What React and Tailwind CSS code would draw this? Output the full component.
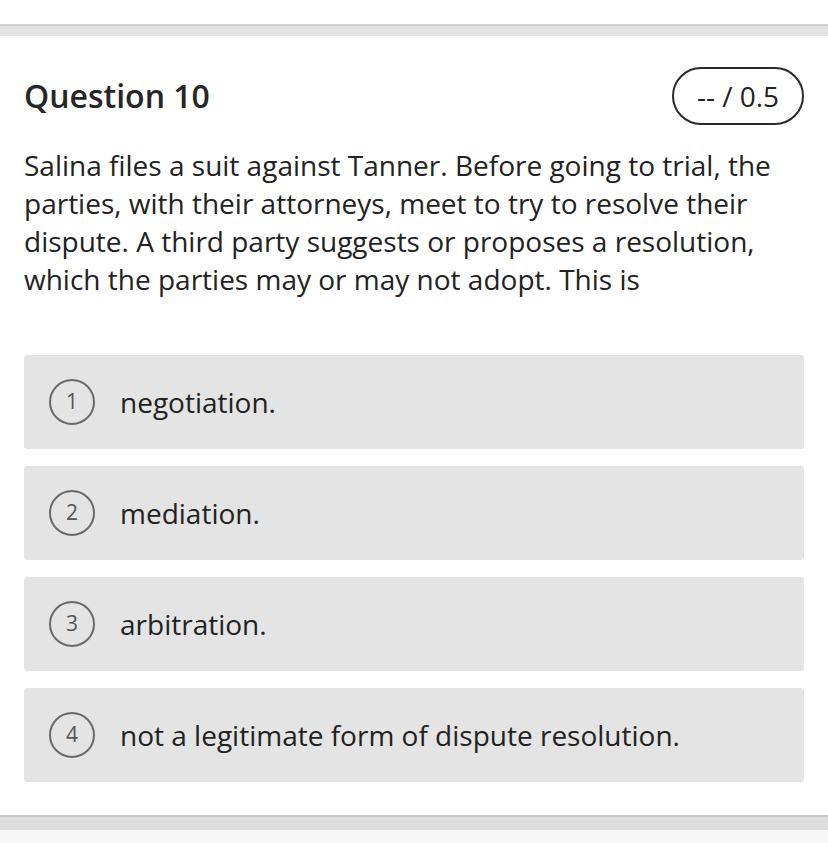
export default function App() {
  const options = [
    "negotiation.",
    "mediation.",
    "arbitration.",
    "not a legitimate form of dispute resolution.",
  ];

  return (
    <div className="w-[828px] h-[843px] bg-white overflow-hidden text-[#222222]" style={{ fontFamily: '"Open Sans", "Noto Sans", sans-serif' }}>
      {/* top divider */}
      <div className="h-[24px] bg-white"></div>
      <div className="h-[12px] border-t-2 border-[#cfcfcf] bg-[#e3e3e3]"></div>

      <div className="px-[24px] pt-[31px]">
        <div className="flex items-center justify-between">
          <h2 className="text-[32px] font-semibold leading-none text-[#262626]">Question 10</h2>
          <div className="h-[58px] w-[132px] rounded-full border-2 border-[#2a2a2a] flex items-center justify-center text-[28px]">
            -- / 0.5
          </div>
        </div>

        <p className="mt-[21px] text-[28px] leading-[38px]">
          Salina files a suit against Tanner. Before going to trial, the parties, with their attorneys, meet to try to resolve their dispute. A third party suggests or proposes a resolution, which the parties may or may not adopt. This is
        </p>

        <div className="mt-[57px] flex flex-col gap-[17px]">
          {options.map((opt, i) => (
            <div key={i} className="h-[94px] rounded-[3px] bg-[#e4e4e4] flex items-center pl-[25px]">
              <div className="w-[46px] h-[46px] rounded-full border-2 border-[#6a6a6a] flex items-center justify-center text-[21px] text-[#555555]">
                {i + 1}
              </div>
              <span className="ml-[25px] text-[28px]">{opt}</span>
            </div>
          ))}
        </div>
      </div>

      {/* bottom divider */}
      <div className="mt-[33px] h-[15px] border-t-2 border-[#c8c8c8] bg-[#dedede]"></div>
      <div className="h-[40px] bg-[#f7f7f7]"></div>
    </div>
  );
}
